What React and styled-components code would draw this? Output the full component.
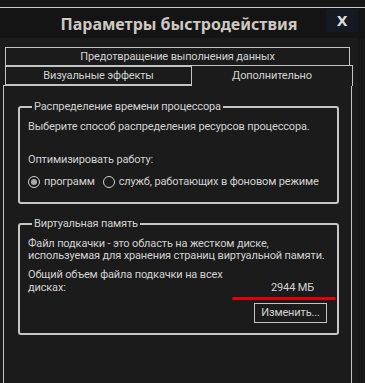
import React from "react";
import styled, { createGlobalStyle } from "styled-components";

const GlobalStyle = createGlobalStyle`
  html, body {
    margin: 0;
    padding: 0;
    background: #1b1b1b;
  }
  * {
    box-sizing: border-box;
  }
`;

const Window = styled.div`
  width: 365px;
  height: 383px;
  overflow: hidden;
  display: flex;
  flex-direction: column;
  background: #1b1b1b;
  font-family: Roboto, "Noto Sans", sans-serif;
  font-size: 11px;
  letter-spacing: -0.15px;
  color: #d2d2d2;
`;

const TopStrip = styled.div`
  height: 8px;
  background: #151515;
  border-bottom: 1px solid #c9c9c9;
`;

const TitleBar = styled.div`
  height: 30px;
  display: grid;
  grid-template-columns: 1fr auto 1fr;
  align-items: start;
  background: #141414;
  padding-right: 7px;
`;

const Title = styled.h1`
  grid-column: 2;
  margin: 0;
  padding-top: 3px;
  font-family: "Noto Sans", sans-serif;
  font-size: 16px;
  font-weight: 700;
  line-height: 26px;
  letter-spacing: 0;
  color: #cdc8c2;
`;

const CloseButton = styled.div`
  grid-column: 3;
  justify-self: end;
  width: 32px;
  height: 23px;
  margin-top: 1px;
  display: flex;
  align-items: center;
  justify-content: center;
  background: #131a21;
  color: #dadada;
  font-size: 14px;
  font-weight: 700;
  font-family: "DejaVu Sans", sans-serif;
`;

const Main = styled.div`
  flex: 1;
  display: flex;
`;

const Content = styled.div`
  width: 358px;
  padding-top: 9px;
  display: flex;
  flex-direction: column;
`;

const RightStrip = styled.div`
  width: 7px;
  background: repeating-linear-gradient(
    90deg,
    #161616 0px,
    #161616 2px,
    #1a1a1a 2px,
    #1a1a1a 3px
  );
`;

const TabRow = styled.div`
  display: flex;
  align-items: flex-end;
  padding-left: 5px;
  margin-top: ${(p) => (p.$overlap ? "-1px" : "0")};
`;

const Tab = styled.div`
  position: relative;
  width: ${(p) => p.$width}px;
  height: ${(p) => (p.$active ? 21 : 19)}px;
  margin-left: ${(p) => (p.$active ? "-1px" : "0")};
  margin-bottom: ${(p) => (p.$active ? "-1px" : "0")};
  z-index: ${(p) => (p.$active ? 2 : 1)};
  display: flex;
  justify-content: center;
  align-items: ${(p) => (p.$active ? "flex-start" : "center")};
  padding-top: ${(p) => (p.$active ? "3px" : "0")};
  border: 1px solid #c3c3c3;
  border-bottom: ${(p) => (p.$active ? "none" : "1px solid #c3c3c3")};
  background: #1b1b1b;
  line-height: 14px;
  white-space: nowrap;
`;

const Panel = styled.div`
  flex: 1;
  width: 349px;
  margin-left: 3px;
  border: 1px solid #c3c3c3;
  border-bottom: none;
  padding: 15px 12px 0 14px;
  display: flex;
  flex-direction: column;
  gap: 14px;
`;

const Group = styled.fieldset`
  margin: 0;
  min-width: 0;
  border: 2px solid #c6c6c6;
  border-radius: 3px;
  padding: ${(p) => p.$pad};
`;

const Legend = styled.legend`
  margin-left: 4px;
  padding: 0 2px;
  line-height: 12px;
`;

const Text = styled.div`
  line-height: 12px;
  white-space: nowrap;
  margin-top: ${(p) => p.$mt || 0}px;
`;

const RadioRow = styled.div`
  display: flex;
  align-items: center;
  margin-top: 10px;
  line-height: 12px;
  white-space: nowrap;
`;

const RadioOption = styled.label`
  display: flex;
  align-items: center;
  gap: 4px;
  margin-right: ${(p) => p.$mr || 0}px;
`;

const RadioCircle = styled.span`
  width: 12px;
  height: 12px;
  border-radius: 50%;
  border: 1px solid #cfcfcf;
  display: flex;
  align-items: center;
  justify-content: center;

  &::after {
    content: "";
    width: 6px;
    height: 6px;
    border-radius: 50%;
    background: ${(p) => (p.$checked ? "#a9a9a9" : "transparent")};
  }
`;

const TotalRow = styled.div`
  display: flex;
  align-items: flex-end;
  margin-top: 6px;
  padding-right: 23px;
`;

const TotalLabel = styled.div`
  width: 200px;
  line-height: 13px;
`;

const TotalValue = styled.div`
  margin-left: auto;
  line-height: 13px;
  white-space: nowrap;
`;

const Underline = styled.div`
  align-self: flex-end;
  width: 104px;
  height: 3px;
  margin-top: 3px;
  margin-right: 1px;
  border-radius: 2px;
  background: #e3000b;
`;

const ButtonRow = styled.div`
  display: flex;
  justify-content: flex-end;
  padding-right: 10px;
  margin-top: 3px;
`;

const Button = styled.button`
  width: 73px;
  height: 20px;
  padding: 0;
  background: #1b1b1b;
  border: 1px solid #c3c3c3;
  color: #d2d2d2;
  font-family: inherit;
  font-size: 11px;
  letter-spacing: inherit;
  line-height: 14px;
`;

const GroupBody = styled.div`
  display: flex;
  flex-direction: column;
`;

export default function App() {
  return (
    <>
      <GlobalStyle />
      <Window>
        <TopStrip />
        <TitleBar>
          <Title>Параметры быстродействия</Title>
          <CloseButton>X</CloseButton>
        </TitleBar>
        <Main>
          <Content>
            <TabRow>
              <Tab $width={345}>Предотвращение выполнения данных</Tab>
            </TabRow>
            <TabRow $overlap>
              <Tab $width={187}>Визуальные эффекты</Tab>
              <Tab $width={162} $active>
                Дополнительно
              </Tab>
            </TabRow>
            <Panel>
              <Group $pad="8px 8px 14px 8px">
                <Legend>Распределение времени процессора</Legend>
                <Text>Выберите способ распределения ресурсов процессора.</Text>
                <Text $mt={21}>Оптимизировать работу:</Text>
                <RadioRow>
                  <RadioOption $mr={8}>
                    <RadioCircle $checked />
                    программ
                  </RadioOption>
                  <RadioOption>
                    <RadioCircle />
                    служб, работающих в фоновом режиме
                  </RadioOption>
                </RadioRow>
              </Group>
              <Group $pad="8px 0 10px 8px">
                <Legend>Виртуальная память</Legend>
                <GroupBody>
                  <Text>
                    Файл подкачки - это область на жестком диске,
                    <br />
                    используемая для хранения страниц виртуальной памяти.
                  </Text>
                  <TotalRow>
                    <TotalLabel>Общий объем файла подкачки на всех дисках:</TotalLabel>
                    <TotalValue>2944 МБ</TotalValue>
                  </TotalRow>
                  <Underline />
                  <ButtonRow>
                    <Button>Изменить...</Button>
                  </ButtonRow>
                </GroupBody>
              </Group>
            </Panel>
          </Content>
          <RightStrip />
        </Main>
      </Window>
    </>
  );
}
